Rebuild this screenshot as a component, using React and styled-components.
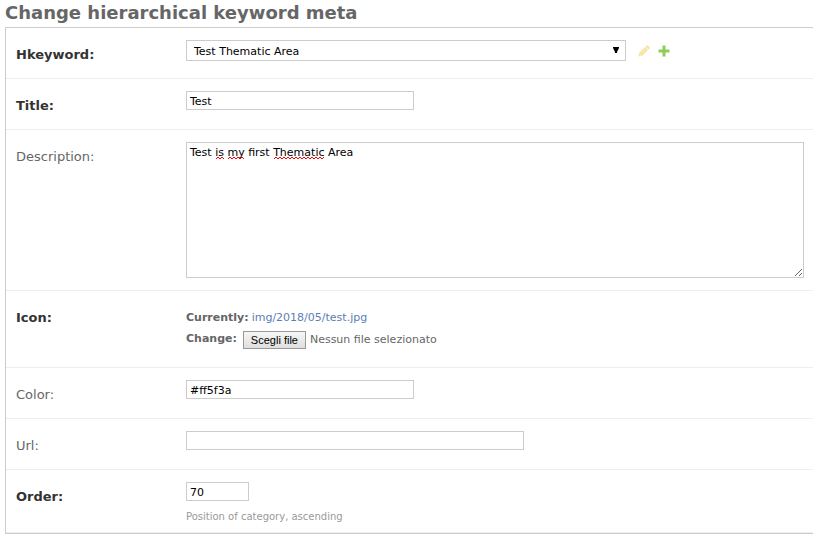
import React, { useRef, useState } from "react";
import styled, { createGlobalStyle, css } from "styled-components";

const GlobalStyle = createGlobalStyle`
  *, *::before, *::after { box-sizing: border-box; }
  body {
    margin: 0;
    background: #fff;
    color: #666;
    font-family: Verdana, "DejaVu Sans", sans-serif;
    font-size: 11px;
    line-height: 14px;
    overflow-x: hidden;
  }
`;

const Page = styled.main`
  padding: 1px 0 5px 5px;
`;

const Heading = styled.h1`
  margin: 0 0 3px;
  color: #666;
  font-size: 18px;
  line-height: 23px;
  font-weight: bold;
  white-space: nowrap;
`;

const Form = styled.form`
  border: 1px solid #ccc;
  border-right: 0;
`;

const Row = styled.div`
  display: grid;
  grid-template-columns: 170px minmax(0, 1fr);
  align-items: start;
  min-height: 51px;
  padding: 12px 9px 12px 10px;
  border-bottom: 1px solid #eee;
  ${(p) => p.$last && css`padding-bottom: 8px;`}
`;

const Label = styled.label`
  padding-top: 6px;
  font-size: 13px;
  line-height: 17px;
  color: ${(p) => (p.$required ? "#333" : "#666")};
  font-weight: ${(p) => (p.$required ? "bold" : "normal")};
`;

const fieldStyle = css`
  margin: 0;
  border: 1px solid #ccc;
  border-radius: 0;
  background: #fff;
  color: #000;
  font-family: inherit;
  font-size: 11px;
  outline-color: #999;
`;

const TextInput = styled.input`
  ${fieldStyle}
  display: block;
  width: ${(p) => p.$width};
  max-width: 100%;
  height: 19px;
  padding: 3px 3px 1px;
`;

const SelectLine = styled.div`
  display: flex;
  align-items: center;
`;

const SelectWrap = styled.div`
  position: relative;
  width: 440px;
  max-width: 100%;
  margin-right: 12px;
`;

const Select = styled.select`
  ${fieldStyle}
  appearance: none;
  display: block;
  width: 100%;
  height: 21px;
  padding: 1px 20px 0 7px;
`;

const Arrow = styled.svg`
  position: absolute;
  top: 7px;
  right: 7px;
  pointer-events: none;
`;

const IconLink = styled.a`
  display: block;
  width: 12px;
  height: 12px;
  margin-right: 8px;
  opacity: ${(p) => (p.$faded ? 0.4 : 1)};

  svg { display: block; }
`;

const AreaWrap = styled.div`
  position: relative;
`;

const TextArea = styled.textarea`
  ${fieldStyle}
  display: block;
  width: 100%;
  height: 136px;
  padding: 3px;
  line-height: 14px;
`;

const SpellMarks = styled.svg`
  position: absolute;
  top: 14px;
  left: 4px;
  pointer-events: none;
`;

const FileInfo = styled.div`
  display: grid;
  grid-template-columns: auto minmax(0, 1fr);
  padding-top: 8px;
  height: 52px;
  align-content: start;
  row-gap: 5px;
`;

const Current = styled.div`
  grid-column: 1 / -1;
  line-height: 14px;
`;

const ChangeLabel = styled.label`
  margin-right: 6px;
  padding-top: 1px;
  font-weight: bold;
  line-height: 16px;
`;

const CurrentName = styled.b`
  margin-right: 3px;
`;

const FileLink = styled.a`
  color: #5b80b2;
  text-decoration: none;
`;

const FilePicker = styled.div`
  display: flex;
  align-items: center;
  height: 20px;
`;

const HiddenFile = styled.input`
  display: none;
`;

const FileButton = styled.button`
  width: 63px;
  height: 18px;
  margin-right: 4px;
  padding: 0;
  border: 1px solid #999;
  border-radius: 0;
  background: linear-gradient(#f6f6f6, #dedede);
  color: #000;
  font-family: Arial, "Liberation Sans", sans-serif;
  font-size: 11px;
  line-height: 14px;
  white-space: nowrap;
`;

const Help = styled.p`
  margin: 9px 0 0;
  color: #999;
  font-size: 10px;
  line-height: 14px;
`;

const zigzag = (start, end) => {
  let d = `M${start} 3`;
  for (let x = start + 2, up = true; x <= end; x += 2, up = !up) {
    d += `L${x} ${up ? 1 : 3}`;
  }
  return d;
};

function Field({ id, label, required, width, value, help, last }) {
  return (
    <Row $last={last}>
      <Label htmlFor={id} $required={required}>{label}</Label>
      <div>
        <TextInput id={id} name={id} type="text" defaultValue={value} $width={width} />
        {help && <Help>{help}</Help>}
      </div>
    </Row>
  );
}

function FileField() {
  const input = useRef(null);
  const [name, setName] = useState("Nessun file selezionato");
  return (
    <Row>
      <Label htmlFor="icon-button" $required>Icon:</Label>
      <FileInfo>
        <Current>
          <CurrentName>Currently:</CurrentName>
          <FileLink href="#icon">img/2018/05/test.jpg</FileLink>
        </Current>
        <ChangeLabel htmlFor="icon">Change:</ChangeLabel>
        <FilePicker>
          <HiddenFile
            ref={input}
            id="icon"
            type="file"
            onChange={(e) => e.target.files[0] && setName(e.target.files[0].name)}
          />
          <FileButton id="icon-button" type="button" onClick={() => input.current.click()}>
            Scegli file
          </FileButton>
          <span>{name}</span>
        </FilePicker>
      </FileInfo>
    </Row>
  );
}

export default function App() {
  const [description, setDescription] = useState("Test is my first Thematic Area");
  const [checked, setChecked] = useState(true);
  return (
    <Page>
      <GlobalStyle />
      <Heading>Change hierarchical keyword meta</Heading>
      <Form>
        <Row>
          <Label htmlFor="hkeyword" $required>Hkeyword:</Label>
          <SelectLine>
            <SelectWrap>
              <Select id="hkeyword" defaultValue="test">
                <option value="test">Test Thematic Area</option>
              </Select>
              <Arrow width="6" height="6" viewBox="0 0 6 6" aria-hidden="true">
                <path d="M0 0H6V1L4 5V6H2V5L0 1Z" fill="#000" />
              </Arrow>
            </SelectWrap>
            <IconLink href="#change" aria-label="Change selected hkeyword" $faded>
              <svg width="12" height="12" viewBox="0 0 12 12">
                <path d="M0.5 11.5L1.2 7.8L7 2L10 5L4.2 10.8Z" fill="#efb80b" />
                <path d="M7.5 1.5L8.5 0.6Q9.2 0 9.9 0.6L11.4 2.1Q12 2.8 11.4 3.5L10.5 4.5Z" fill="#efb80b" />
                <path d="M1.7 8.9L3.1 10.3L2.2 10.5L1.5 9.8Z" fill="#fff" />
                <path d="M3 8L7 4" stroke="#fff" strokeWidth="0.5" />
              </svg>
            </IconLink>
            <IconLink href="#add" aria-label="Add another hkeyword">
              <svg width="12" height="12" viewBox="0 0 12 12">
                <path d="M4.5 0.5H7.5V4.5H11.5V7.5H7.5V11.5H4.5V7.5H0.5V4.5H4.5Z" fill="#70bf2b" opacity="0.8" />
              </svg>
            </IconLink>
          </SelectLine>
        </Row>
        <Field id="title" label="Title:" required width="228px" value="Test" />
        <Row>
          <Label htmlFor="description">Description:</Label>
          <AreaWrap>
            <TextArea
              id="description"
              value={description}
              spellCheck={false}
              onChange={(e) => {
                setDescription(e.target.value);
                setChecked(false);
              }}
            />
            {checked && (
              <SpellMarks width="140" height="4" viewBox="0 0 140 4" aria-hidden="true">
                <path
                  d={zigzag(26, 34) + zigzag(38, 55) + zigzag(84, 135)}
                  fill="none"
                  stroke="#f00"
                  strokeWidth="1"
                />
              </SpellMarks>
            )}
          </AreaWrap>
        </Row>
        <FileField />
        <Field id="color" label="Color:" width="228px" value="#ff5f3a" />
        <Field id="url" label="Url:" width="338px" value="" />
        <Field
          id="order"
          label="Order:"
          required
          width="63px"
          value="70"
          help="Position of category, ascending"
          last
        />
      </Form>
    </Page>
  );
}
